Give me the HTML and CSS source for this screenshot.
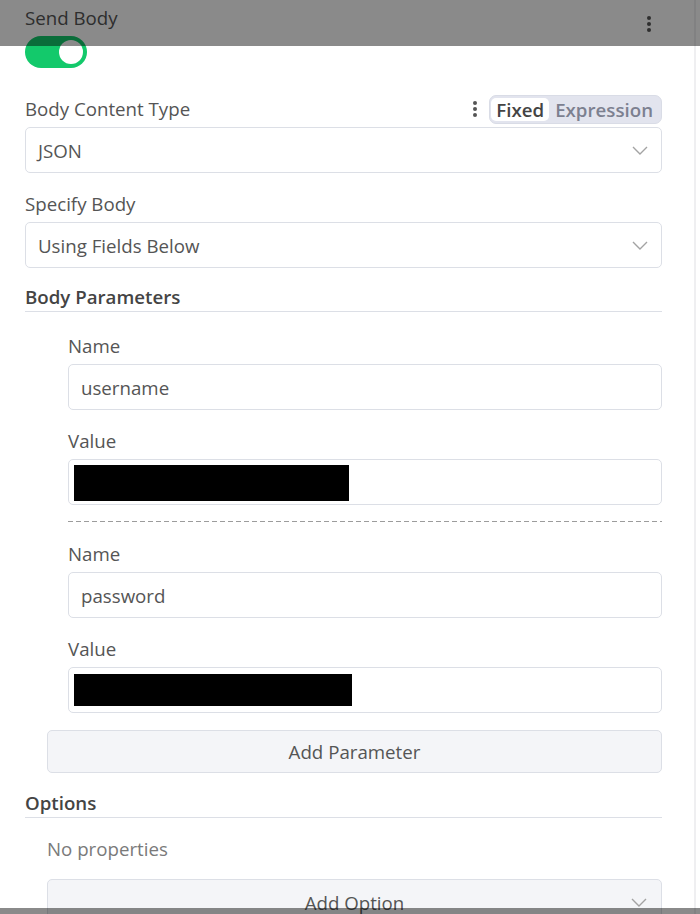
FILE: index.html
```html
<!DOCTYPE html>
<html lang="en">
<head>
    <meta charset="UTF-8">
    <meta name="viewport" content="width=device-width, initial-scale=1.0">
    <title>HTTP Request - Body</title>
    <link rel="stylesheet" href="styles.css">
</head>
<body>

    <div class="panel">
        <div class="param">
            <div class="label-row">
                <span class="label">Send Body</span>
                <span class="dots dots-top"><i></i><i></i><i></i></span>
            </div>
            <div class="switch"><div class="knob"></div></div>
        </div>

        <div class="param param-type">
            <div class="label-row">
                <span class="label">Body Content Type</span>
                <div class="label-tools">
                    <span class="dots"><i></i><i></i><i></i></span>
                    <div class="mode">
                        <span class="mode-item active">Fixed</span>
                        <span class="mode-item mode-expr">Expression</span>
                    </div>
                </div>
            </div>
            <div class="field select">
                <span>JSON</span>
                <svg class="chevron" width="16" height="9" viewBox="0 0 16 9"><path d="M1 1l7 7 7-7" fill="none" stroke="#a3a3a3" stroke-width="1.4"/></svg>
            </div>
        </div>

        <div class="param">
            <div class="label-row"><span class="label">Specify Body</span></div>
            <div class="field select">
                <span>Using Fields Below</span>
                <svg class="chevron" width="16" height="9" viewBox="0 0 16 9"><path d="M1 1l7 7 7-7" fill="none" stroke="#a3a3a3" stroke-width="1.4"/></svg>
            </div>
        </div>

        <div class="section">
            <div class="section-title">Body Parameters</div>

            <div class="group">
                <div class="param sub">
                    <div class="label-row"><span class="label">Name</span></div>
                    <div class="field">username</div>
                </div>
                <div class="param sub">
                    <div class="label-row"><span class="label">Value</span></div>
                    <div class="field field-secret"><div class="redact redact-one"></div></div>
                </div>
            </div>

            <div class="divider"></div>

            <div class="group group-next">
                <div class="param sub">
                    <div class="label-row"><span class="label">Name</span></div>
                    <div class="field">password</div>
                </div>
                <div class="param sub">
                    <div class="label-row"><span class="label">Value</span></div>
                    <div class="field field-secret"><div class="redact redact-two"></div></div>
                </div>
            </div>

            <div class="add-btn">Add Parameter</div>
        </div>

        <div class="section section-options">
            <div class="section-title">Options</div>
            <div class="empty">No properties</div>
            <div class="add-btn add-option">
                <span>Add Option</span>
                <svg class="chevron" width="16" height="9" viewBox="0 0 16 9"><path d="M1 1l7 7 7-7" fill="none" stroke="#a3a3a3" stroke-width="1.4"/></svg>
            </div>
        </div>
    </div>

    <div class="shade shade-top"></div>
    <div class="shade shade-bottom"></div>

</body>
</html>
```

FILE: styles.css
```css
html, body {
    margin: 0;
    height: 100%;
    overflow: hidden;
}
body {
    font-family: "Open Sans", "Liberation Sans", sans-serif;
    font-size: 18.7px;
    color: #555;
    background-color: #fff;
}
.panel {
    width: 696px;
    height: 100vh;
    box-sizing: border-box;
    padding: 6px 32px 0 25px;
    border-right: 2px solid #efeff1;
    overflow: hidden;
}
.param {
    margin-bottom: 19px;
}
.label-row {
    display: flex;
    align-items: center;
    justify-content: space-between;
    height: 24px;
    margin-bottom: 6px;
}
.label {
    line-height: 24px;
    color: #555;
}
.dots {
    display: flex;
    flex-direction: column;
    gap: 2px;
}
.dots i {
    width: 4px;
    height: 4px;
    border-radius: 50%;
    background-color: #555;
}
.dots-top {
    margin-right: 11px;
    margin-top: 12px;
}
.switch {
    width: 62px;
    height: 32px;
    box-sizing: border-box;
    border-radius: 16px;
    background-color: #13c96b;
    display: flex;
    justify-content: flex-end;
    align-items: center;
    padding-right: 4px;
    margin-top: 5px;
}
.knob {
    width: 24px;
    height: 24px;
    border-radius: 50%;
    background-color: #fff;
}
.param-type {
    margin-top: 29px;
}
.label-tools {
    display: flex;
    align-items: center;
    gap: 12px;
}
.mode {
    display: flex;
    align-items: center;
    height: 29px;
    box-sizing: border-box;
    padding: 0 8px 0 1px;
    border-radius: 7px;
    background-color: #e2e4ee;
    border: 1px solid #d9dce6;
    font-weight: 600;
}
.mode-item {
    color: #7c8090;
    line-height: 23px;
    padding: 0 5px;
}
.mode-item.active {
    color: #444;
    background-color: #fff;
    border-radius: 5px;
}
.mode-expr {
    padding: 0 0 0 6px;
}
.field {
    height: 46px;
    box-sizing: border-box;
    border: 1px solid #dcdfe6;
    border-radius: 5px;
    padding: 0 12px;
    display: flex;
    align-items: center;
    justify-content: space-between;
    color: #555;
    background-color: #fff;
}
.chevron {
    margin-right: 1px;
}
.section {
    margin-top: -2px;
}
.section-title {
    font-weight: 600;
    color: #444;
    line-height: 24px;
    padding-bottom: 2px;
    border-bottom: 1px solid #dcdfe6;
}
.group {
    padding-left: 43px;
}
.group .param {
    margin-bottom: 19px;
}
.group .param:first-child {
    margin-top: 22px;
}
.group-next .param:first-child {
    margin-top: 20px;
}
.group .param:last-child {
    margin-bottom: 0;
}
.field-secret {
    padding: 0 5px;
    align-items: flex-start;
}
.redact {
    background-color: #000;
    margin-top: 5px;
}
.redact-one {
    width: 275px;
    height: 36px;
}
.redact-two {
    width: 278px;
    height: 32px;
    margin-top: 6px;
}
.divider {
    margin: 16px 0 0 43px;
    height: 1px;
    background-image: repeating-linear-gradient(to right, #9c9c9c 0 5px, transparent 5px 8px);
}
.add-btn {
    margin: 17px 0 0 22px;
    height: 43px;
    box-sizing: border-box;
    border: 1px solid #dcdfe6;
    border-radius: 5px;
    background-color: #f4f5f8;
    display: flex;
    align-items: center;
    justify-content: center;
    color: #555;
}
.section-options {
    margin-top: 18px;
}
.empty {
    padding-left: 22px;
    line-height: 24px;
    margin-top: 19px;
    color: #7a7a7a;
}
.add-option {
    position: relative;
    margin-top: 18px;
    height: 46px;
}
.add-option .chevron {
    position: absolute;
    right: 13px;
    top: 18px;
}
.shade {
    position: fixed;
    left: 0;
    right: 0;
    background-color: rgba(0, 0, 0, 0.46);
}
.shade-top {
    top: 0;
    height: 46px;
}
.shade-bottom {
    bottom: 0;
    height: 6px;
}
```
